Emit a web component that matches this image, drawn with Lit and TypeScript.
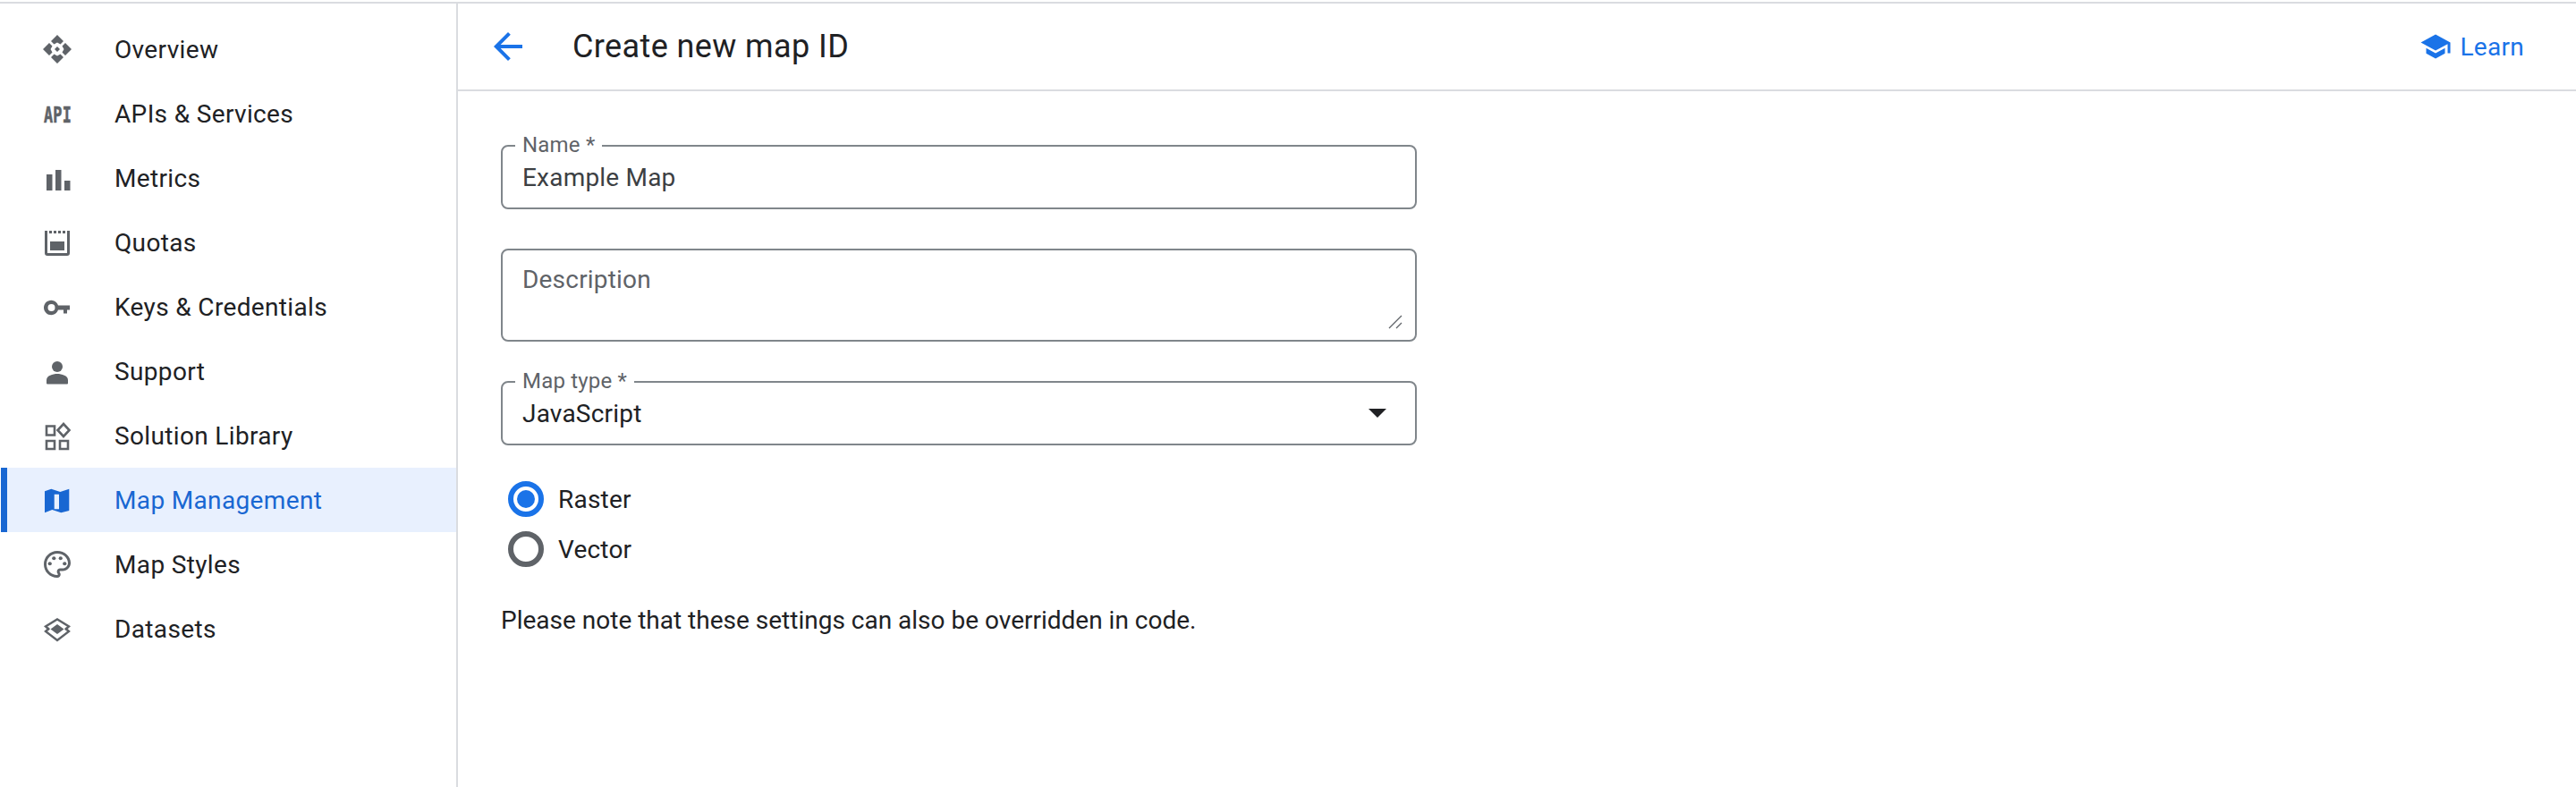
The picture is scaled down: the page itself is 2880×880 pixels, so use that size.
import { LitElement, html, css, svg } from 'lit';
import { customElement } from 'lit/decorators.js';

const NAV = [
  {
    label: 'Overview',
    icon: svg`<path d="M20 4l7 7-3.500 3.500L20 12.500l-3.500 2L13 11z"/><path d="M20 4l7 7-3.500 3.500L20 12.500l-3.500 2L13 11z" transform="rotate(90 20 20)"/><path d="M20 4l7 7-3.500 3.500L20 12.500l-3.500 2L13 11z" transform="rotate(180 20 20)"/><path d="M20 4l7 7-3.500 3.500L20 12.500l-3.500 2L13 11z" transform="rotate(270 20 20)"/><path d="M20 17l3 3-3 3-3-3z"/>`,
  },
  {
    label: 'APIs & Services',
    icon: svg`<text transform="translate(5 30) scale(.7 1)" font-family="DejaVu Sans Mono, monospace" font-weight="700" font-size="24" stroke="currentColor" stroke-width=".6">API</text>`,
  },
  {
    label: 'Metrics',
    icon: svg`<path d="M8 16h6.500v18H8zM18 11h6.500v23H18zM28 23h6.500v11H28z"/>`,
  },
  {
    label: 'Quotas',
    icon: svg`<path d="M6 7h3v25h22V7h3v25a3 3 0 0 1-3 3H9a3 3 0 0 1-3-3zM11 7h3v3h-3zM16 7h3v3h-3zM21 7h3v3h-3zM26 7h3v3h-3zM12 19h16v10H12z"/>`,
  },
  {
    label: 'Keys & Credentials',
    icon: svg`<path fill-rule="evenodd" d="M21 18.500h13v5h-3v4h-4v-4h-6a8.200 8.200 0 1 1 0-5zM13.500 17a4 4 0 1 0 0 8 4 4 0 0 0 0-8z"/>`,
  },
  {
    label: 'Support',
    icon: svg`<circle cx="20" cy="15" r="6"/><path d="M8 30c0-5 7-7 12-7s12 2 12 7v3.500a1 1 0 0 1-1 1H9a1 1 0 0 1-1-1z"/>`,
  },
  {
    label: 'Solution Library',
    icon: svg`<g fill="none" stroke="currentColor" stroke-width="2.600"><path d="M8 9.500h9v10H8zM8 26h9v9H8zM23 26h9v9h-9z"/><path d="M27 7l6.500 7-6.500 7-6.500-7z"/></g>`,
  },
  {
    label: 'Map Management',
    icon: svg`<path fill-rule="evenodd" d="M6 10.300l7.300-2.600 10 3.300 10-3.300V32l-9 2.300-10-3.300L6 34.300zM16.700 13.700V30.300H22V13.700z"/>`,
  },
  {
    label: 'Map Styles',
    icon: svg`<g transform="translate(2 2) scale(1.5)"><path d="M12 22C6.490 22 2 17.510 2 12S6.490 2 12 2s10 4.040 10 9c0 3.310-2.690 6-6 6h-1.770c-.280 0-.500.220-.500.500 0 .120.050.230.130.330.410.470.640 1.060.640 1.670 0 1.380-1.120 2.500-2.500 2.500zm0-18c-4.410 0-8 3.590-8 8s3.590 8 8 8c.280 0 .500-.220.500-.500a.540.540 0 0 0-.140-.350c-.410-.460-.630-1.050-.630-1.650 0-1.380 1.120-2.500 2.500-2.500H16c2.210 0 4-1.790 4-4 0-3.860-3.590-7-8-7z"/><circle cx="6.500" cy="11.500" r="1.400"/><circle cx="9.500" cy="7.500" r="1.400"/><circle cx="14.500" cy="7.500" r="1.400"/><circle cx="17.500" cy="11.500" r="1.400"/></g>`,
  },
  {
    label: 'Datasets',
    icon: svg`<path d="M20 15l7.500 5.500L20 26l-7.500-5.500z"/><g fill="none" stroke="currentColor" stroke-width="2.400"><path d="M11 21l-4-3.500L20 9.500l13 8-4 3.500"/><path d="M11 19.500l-4 3.500 13 10 13-10-4-3.500"/></g>`,
  },
];

@customElement('app-root')
export class AppRoot extends LitElement {
  static styles = css`
    :host {
      display: block;
      width: 2880px;
      height: 880px;
      box-sizing: border-box;
      padding-top: 2px;
      background: #fff;
      color: #202124;
      font-family: Roboto, 'Liberation Sans', sans-serif;
    }

    .shell {
      display: flex;
      height: 878px;
      box-sizing: border-box;
      border-top: 2px solid #dadce0;
    }

    .sidebar {
      width: 512px;
      flex: none;
      box-sizing: border-box;
      padding: 15px 0 0 1px;
      border-right: 2px solid #dadce0;
    }

    .nav-item {
      display: flex;
      align-items: center;
      height: 72px;
      box-sizing: border-box;
      padding-left: 43px;
      font-size: 28px;
      letter-spacing: 0.35px;
    }

    .nav-item.active {
      padding-left: 36px;
      border-left: 7px solid #1967d2;
      background: #e8f0fe;
      color: #1967d2;
    }

    .nav-icon {
      width: 40px;
      height: 40px;
      flex: none;
      margin-right: 44px;
      color: #5f6368;
      fill: currentColor;
    }

    .active .nav-icon {
      color: #1967d2;
    }

    main {
      flex: 1;
      min-width: 0;
    }

    header {
      display: flex;
      align-items: center;
      height: 98px;
      box-sizing: border-box;
      padding: 0 58px 0 32px;
      border-bottom: 2px solid #dadce0;
    }

    .back {
      width: 48px;
      height: 48px;
      flex: none;
      fill: #1a73e8;
    }

    h1 {
      flex: 1;
      margin: 0 0 0 48px;
      font-size: 36px;
      font-weight: 400;
      letter-spacing: 0.4px;
    }

    .learn {
      display: flex;
      align-items: center;
      gap: 9px;
      color: #1a73e8;
      font-size: 28px;
      letter-spacing: 0.3px;
    }

    .learn svg {
      width: 36px;
      height: 36px;
      fill: currentColor;
    }

    form {
      display: flex;
      flex-direction: column;
      width: 1024px;
      padding: 60px 0 0 48px;
    }

    .field {
      position: relative;
      display: flex;
      align-items: center;
      height: 72px;
      box-sizing: border-box;
      margin-bottom: 44px;
      padding: 0 22px;
      border: 2px solid #80868b;
      border-radius: 8px;
      font-size: 28px;
      letter-spacing: 0.2px;
    }

    .field .value {
      flex: 1;
    }

    .muted-value {
      color: #3c4043;
    }

    .float-label {
      position: absolute;
      top: -16px;
      left: 14px;
      padding: 0 8px;
      background: #fff;
      color: #5f6368;
      font-size: 24px;
      line-height: 28px;
    }

    .area {
      height: 104px;
      align-items: flex-start;
      padding-top: 16px;
      color: #5f6368;
    }

    .handle {
      position: absolute;
      right: 14px;
      bottom: 12px;
      width: 16px;
      height: 16px;
    }

    .caret {
      width: 20px;
      height: 10px;
      margin-right: 10px;
      fill: #202124;
    }

    .radios {
      margin-top: -12px;
      margin-bottom: 32px;
    }

    .radio {
      display: flex;
      align-items: center;
      gap: 16px;
      height: 56px;
      padding-left: 8px;
      font-size: 28px;
      letter-spacing: 0.2px;
    }

    .dot {
      display: flex;
      align-items: center;
      justify-content: center;
      width: 40px;
      height: 40px;
      box-sizing: border-box;
      border: 6px solid #5f6368;
      border-radius: 50%;
    }

    .dot.on {
      border-color: #1a73e8;
    }

    .dot.on::after {
      content: '';
      width: 20px;
      height: 20px;
      border-radius: 50%;
      background: #1a73e8;
    }

    .note {
      margin: 0;
      font-size: 28px;
      line-height: 40px;
      white-space: nowrap;
    }
  `;

  render() {
    return html`
      <div class="shell">
        <nav class="sidebar">
          ${NAV.map(
            (item) => html`
              <div class="nav-item ${item.label === 'Map Management' ? 'active' : ''}">
                <svg class="nav-icon" viewBox="0 0 40 40">${item.icon}</svg>
                <span>${item.label}</span>
              </div>
            `
          )}
        </nav>
        <main>
          <header>
            <svg class="back" viewBox="0 0 24 24">
              <path d="M20 11H7.830l5.590-5.590L12 4l-8 8 8 8 1.410-1.410L7.830 13H20v-2z" />
            </svg>
            <h1>Create new map ID</h1>
            <div class="learn">
              <svg viewBox="0 0 24 24">
                <path d="M5 13.180v4L12 21l7-3.820v-4L12 17l-7-3.820zM12 3 1 9l11 6 9-4.910V17h2V9L12 3z" />
              </svg>
              <span>Learn</span>
            </div>
          </header>
          <form>
            <div class="field">
              <span class="float-label">Name *</span>
              <span class="value muted-value">Example Map</span>
            </div>
            <div class="field area">
              <span class="value">Description</span>
              <svg class="handle" viewBox="0 0 16 16" fill="none" stroke="#5f6368" stroke-width="1.300">
                <path d="M1 15L15 1M9 15l6-6" />
              </svg>
            </div>
            <div class="field">
              <span class="float-label">Map type *</span>
              <span class="value">JavaScript</span>
              <svg class="caret" viewBox="0 0 20 10"><path d="M0 0h20L10 10z" /></svg>
            </div>
            <div class="radios">
              <div class="radio"><span class="dot on"></span>Raster</div>
              <div class="radio"><span class="dot"></span>Vector</div>
            </div>
            <p class="note">Please note that these settings can also be overridden in code.</p>
          </form>
        </main>
      </div>
    `;
  }
}
